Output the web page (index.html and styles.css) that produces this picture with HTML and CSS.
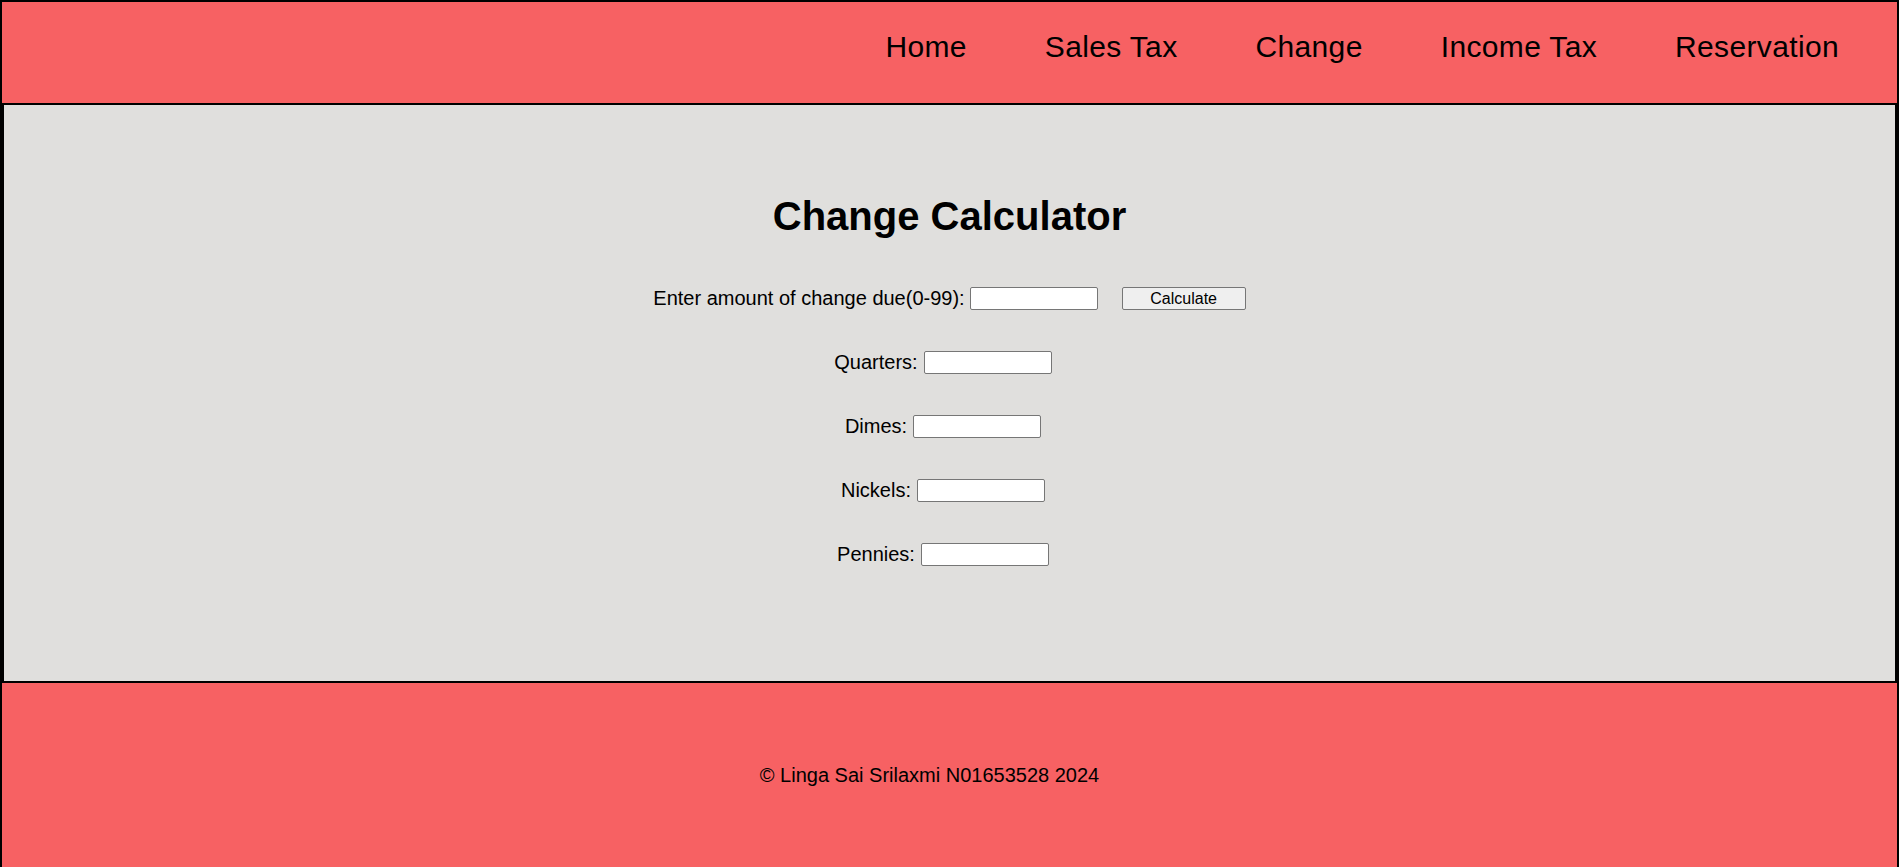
FILE: index.html
```html
<!DOCTYPE html>
<html lang="en">
<head>
<meta charset="utf-8">
<title>Change Calculator</title>
<link rel="stylesheet" href="styles.css">
</head>
<body>
<header class="site-header">
  <nav class="nav">
    <a class="nav-link" href="#">Home</a>
    <a class="nav-link" href="#">Sales Tax</a>
    <a class="nav-link" href="#">Change</a>
    <a class="nav-link" href="#">Income Tax</a>
    <a class="nav-link" href="#">Reservation</a>
  </nav>
</header>
<main class="content">
  <h1 class="title">Change Calculator</h1>
  <form class="calc-form">
    <div class="row">
      <label class="label" for="amount">Enter amount of change due(0-99):</label>
      <input class="field" id="amount" type="text">
      <button class="btn" type="button">Calculate</button>
    </div>
    <div class="row">
      <label class="label" for="quarters">Quarters:</label>
      <input class="field field-out" id="quarters" type="text">
    </div>
    <div class="row">
      <label class="label" for="dimes">Dimes:</label>
      <input class="field field-out" id="dimes" type="text">
    </div>
    <div class="row">
      <label class="label" for="nickels">Nickels:</label>
      <input class="field field-out" id="nickels" type="text">
    </div>
    <div class="row">
      <label class="label" for="pennies">Pennies:</label>
      <input class="field field-out" id="pennies" type="text">
    </div>
  </form>
</main>
<footer class="site-footer">
  <p class="copy">&copy; Linga Sai Srilaxmi N01653528 2024</p>
</footer>
</body>
</html>
```
FILE: styles.css
```css
* {
  box-sizing: border-box;
}

html, body {
  margin: 0;
  padding: 0;
}

body {
  font-family: "Liberation Sans", Arial, sans-serif;
  font-size: 20px;
  color: #000;
  background: #fff;
}

.site-header {
  background: #f76163;
  border: 2px solid #000;
  height: 105px;
  padding-top: 28px;
  padding-right: 58px;
}

.nav {
  display: flex;
  justify-content: flex-end;
  gap: 78px;
}

.nav-link {
  font-size: 30px;
  letter-spacing: 0.35px;
  color: #000;
  text-decoration: none;
  line-height: 34.5px;
}

.content {
  background: #e0dfdd;
  border-left: 4px solid #000;
  border-right: 4px solid #000;
  height: 576px;
  padding-top: 88px;
}

.title {
  margin: 0;
  font-size: 40px;
  font-weight: bold;
  line-height: 46px;
  text-align: center;
}

.calc-form {
  margin-top: 47.5px;
  display: flex;
  flex-direction: column;
  align-items: center;
  gap: 41px;
}

.row {
  display: flex;
  align-items: center;
  gap: 5px;
  height: 23px;
}

.label {
  line-height: 23px;
}

.field {
  width: 128px;
  height: 23px;
  background: #fff;
  border: 1px solid #767676;
  border-radius: 2px;
  padding: 1px 2px;
  font-family: "Liberation Sans", Arial, sans-serif;
  font-size: 13px;
}

.field-out {
  margin-left: 1px;
  margin-right: 13px;
}

.btn {
  margin-left: 19px;
  width: 124px;
  height: 23px;
  background: #efefef;
  border: 1px solid #767676;
  border-radius: 2px;
  font-family: "Liberation Sans", Arial, sans-serif;
  font-size: 16px;
  color: #000;
  padding: 0;
  line-height: 21px;
}

.site-footer {
  background: #f76163;
  border: 2px solid #000;
  border-bottom: 0;
  height: 186px;
  padding-top: 81px;
  padding-right: 40px;
}

.copy {
  margin: 0;
  text-align: center;
  line-height: 23px;
}
```
